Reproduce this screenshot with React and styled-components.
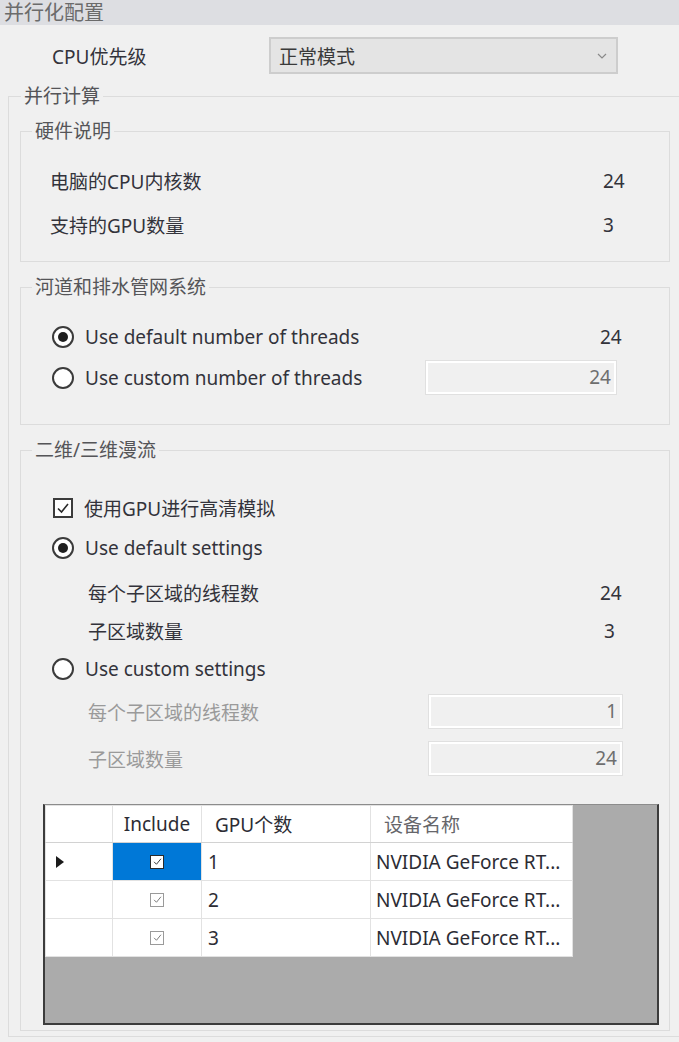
import React from 'react';
import styled, { createGlobalStyle } from 'styled-components';

const GlobalStyle = createGlobalStyle`
  html, body {
    margin: 0;
    padding: 0;
    background: #f0f0f0;
    overflow: hidden;
  }
  body {
    font-family: "Noto Sans", "Noto Sans CJK SC", sans-serif;
    color: #33333b;
  }
`;

const Window = styled.div`
  width: 679px;
  height: 1042px;
  background: #f0f0f0;
  font-size: 19px;
`;

const TitleBar = styled.div`
  height: 25px;
  line-height: 25px;
  padding-left: 4px;
  background: #dddee2;
  color: #6b6b6b;
  font-size: 20px;
`;

const PriorityRow = styled.div`
  display: flex;
  align-items: center;
  height: 37px;
  margin-top: 12px;
  padding-left: 52px;
`;

const PriorityLabel = styled.span`
  width: 217px;
`;

const Dropdown = styled.div`
  display: flex;
  align-items: center;
  justify-content: space-between;
  box-sizing: border-box;
  width: 349px;
  height: 37px;
  padding: 0 9px 0 8px;
  background: #e4e4e4;
  border: 2px solid #cdcdcd;
  color: #3a3a3a;
`;

const Group = styled.fieldset`
  box-sizing: border-box;
  min-width: 0;
  margin: ${p => p.$mt || 0}px 0 0 ${p => p.$ml || 0}px;
  padding: ${p => p.$pad || '0'};
  width: ${p => (p.$w ? `${p.$w}px` : 'auto')};
  border: 1px solid #dcdcdc;
  ${p => p.$open && 'border-right: none;'}
`;

const Legend = styled.legend`
  margin-left: ${p => p.$offset}px;
  padding: 0 3px;
  line-height: 24px;
  font-size: 19px;
  color: #555558;
`;

const GroupBody = styled.div`
  padding: ${p => p.$pt}px 0 ${p => p.$pb}px;
`;

const Row = styled.div`
  display: grid;
  grid-template-columns: ${p => p.$cols};
  align-items: center;
  height: ${p => p.$h}px;
  margin-top: ${p => p.$mt || 0}px;
  padding-left: ${p => p.$indent}px;
  color: ${p => (p.$muted ? '#9a9a9a' : 'inherit')};
`;

const Option = styled.label`
  display: flex;
  align-items: center;
  gap: 11px;
  white-space: nowrap;
`;

const RadioCircle = styled.span`
  flex: none;
  display: inline-flex;
  align-items: center;
  justify-content: center;
  box-sizing: border-box;
  width: 22px;
  height: 22px;
  border-radius: 50%;
  border: 2px solid #3b3b3b;
  background: #fff;

  &::after {
    content: '';
    display: ${p => (p.$checked ? 'block' : 'none')};
    width: 10px;
    height: 10px;
    border-radius: 50%;
    background: #1f1f1f;
  }
`;

const CheckBox = styled.span`
  flex: none;
  display: inline-flex;
  align-items: center;
  justify-content: center;
  box-sizing: border-box;
  width: ${p => p.$size}px;
  height: ${p => p.$size}px;
  margin-left: ${p => p.$ml || 0}px;
  border: ${p => p.$border};
  background: #fff;
`;

const TextBox = styled.div`
  box-sizing: border-box;
  width: ${p => p.$w}px;
  height: 35px;
  line-height: 33px;
  padding-right: 5px;
  text-align: right;
  background: #f0f0f0;
  border: 1px solid #e0e0e0;
  box-shadow: inset 0 0 0 2px #fff;
  color: #6e6e6e;
`;

const GridFrame = styled.div`
  box-sizing: border-box;
  width: 616px;
  height: 221px;
  margin: 22px 0 0 22px;
  background: #ababab;
  border: 2px solid #3c3c3c;
  border-top: 1px solid #8c8c8c;
`;

const Grid = styled.table`
  border-collapse: collapse;
  table-layout: fixed;
  width: 527px;
  background: #fff;
`;

const HeadCell = styled.th`
  height: 36px;
  padding: 0 0 0 ${p => p.$pl || 0}px;
  font-weight: normal;
  text-align: ${p => p.$align || 'left'};
  color: ${p => p.$color || '#2c2c34'};
  border: 1px solid #e2e2e2;
  border-bottom-color: #d2d2d2;
  white-space: nowrap;
`;

const Cell = styled.td`
  height: 37px;
  padding: 0 0 0 ${p => p.$pl || 0}px;
  text-align: ${p => p.$align || 'left'};
  background: ${p => (p.$selected ? '#0078d7' : '#fff')};
  border: 1px solid #e2e2e2;
  white-space: nowrap;
  color: #2c2c34;
`;

const CellInner = styled.div`
  display: flex;
  align-items: center;
  justify-content: ${p => p.$justify || 'flex-start'};
`;

const Tick = ({ size, color, width }) => (
  <svg width={size} height={size} viewBox="0 0 16 16">
    <polyline points="3,8.5 6.5,12 13,4" fill="none" stroke={color} strokeWidth={width} />
  </svg>
);

const Radio = ({ checked, children }) => (
  <Option>
    <RadioCircle $checked={checked} />
    <span>{children}</span>
  </Option>
);

const Chevron = () => (
  <svg width="10" height="6" viewBox="0 0 10 6">
    <polyline points="1,1 5,5 9,1" fill="none" stroke="#8a8a8a" strokeWidth="1.2" />
  </svg>
);

const RowArrow = () => (
  <svg width="8" height="12" viewBox="0 0 8 12">
    <polygon points="0,0 8,6 0,12" fill="#1a1a1a" />
  </svg>
);

const gpus = [
  { id: 1, name: 'NVIDIA GeForce RT...' },
  { id: 2, name: 'NVIDIA GeForce RT...' },
  { id: 3, name: 'NVIDIA GeForce RT...' },
];

export default function App() {
  return (
    <Window>
      <GlobalStyle />
      <TitleBar>并行化配置</TitleBar>

      <PriorityRow>
        <PriorityLabel>CPU优先级</PriorityLabel>
        <Dropdown>
          <span>正常模式</span>
          <Chevron />
        </Dropdown>
      </PriorityRow>

      <Group $open $mt={10} $ml={8} $pad="0 0 5px 11px">
        <Legend $offset={1}>并行计算</Legend>

        <Group $mt={11} $w={650}>
          <Legend $offset={11}>硬件说明</Legend>
          <GroupBody $pt={16} $pb={14}>
            <Row $cols="553px auto" $h={44} $indent={29}>
              <span>电脑的CPU内核数</span>
              <span>24</span>
            </Row>
            <Row $cols="553px auto" $h={44} $indent={29}>
              <span>支持的GPU数量</span>
              <span>3</span>
            </Row>
          </GroupBody>
        </Group>

        <Group $mt={13} $w={650}>
          <Legend $offset={11}>河道和排水管网系统</Legend>
          <GroupBody $pt={17} $pb={26}>
            <Row $cols="548px auto" $h={41} $indent={31}>
              <Radio checked>Use default number of threads</Radio>
              <span>24</span>
            </Row>
            <Row $cols="373px auto" $h={41} $indent={31}>
              <Radio>Use custom number of threads</Radio>
              <TextBox $w={192}>24</TextBox>
            </Row>
          </GroupBody>
        </Group>

        <Group $mt={13} $w={650}>
          <Legend $offset={11}>二维/三维漫流</Legend>
          <GroupBody $pt={26} $pb={5}>
            <Row $cols="auto" $h={40} $indent={31}>
              <Option>
                <CheckBox $size={20} $ml={1} $border="2px solid #3b3b3b">
                  <Tick size={16} color="#2a2a2a" width={1.6} />
                </CheckBox>
                <span>使用GPU进行高清模拟</span>
              </Option>
            </Row>
            <Row $cols="auto" $h={40} $indent={31}>
              <Radio checked>Use default settings</Radio>
            </Row>
            <Row $cols="512px auto" $h={38} $mt={6} $indent={67}>
              <span>每个子区域的线程数</span>
              <span>24</span>
            </Row>
            <Row $cols="516px auto" $h={38} $indent={67}>
              <span>子区域数量</span>
              <span>3</span>
            </Row>
            <Row $cols="auto" $h={38} $indent={31}>
              <Radio>Use custom settings</Radio>
            </Row>
            <Row $cols="340px auto" $h={47} $indent={67} $muted>
              <span>每个子区域的线程数</span>
              <TextBox $w={195}>1</TextBox>
            </Row>
            <Row $cols="340px auto" $h={47} $indent={67} $muted>
              <span>子区域数量</span>
              <TextBox $w={195}>24</TextBox>
            </Row>

            <GridFrame>
              <Grid>
                <colgroup>
                  <col style={{ width: 67 }} />
                  <col style={{ width: 89 }} />
                  <col style={{ width: 169 }} />
                  <col style={{ width: 202 }} />
                </colgroup>
                <thead>
                  <tr>
                    <HeadCell />
                    <HeadCell $align="center">Include</HeadCell>
                    <HeadCell $pl={13}>GPU个数</HeadCell>
                    <HeadCell $pl={13} $color="#66666a">设备名称</HeadCell>
                  </tr>
                </thead>
                <tbody>
                  {gpus.map((gpu, i) => (
                    <tr key={gpu.id}>
                      <Cell $pl={10}>{i === 0 ? <CellInner><RowArrow /></CellInner> : null}</Cell>
                      <Cell $selected={i === 0}>
                        <CellInner $justify="center">
                          <CheckBox $size={14} $border={i === 0 ? '1px solid #2a2a2a' : '1px solid #9a9a9a'}>
                            <Tick size={11} color={i === 0 ? '#333' : '#777'} width={1.4} />
                          </CheckBox>
                        </CellInner>
                      </Cell>
                      <Cell $pl={6}>{gpu.id}</Cell>
                      <Cell $pl={5}>{gpu.name}</Cell>
                    </tr>
                  ))}
                </tbody>
              </Grid>
            </GridFrame>
          </GroupBody>
        </Group>
      </Group>
    </Window>
  );
}
